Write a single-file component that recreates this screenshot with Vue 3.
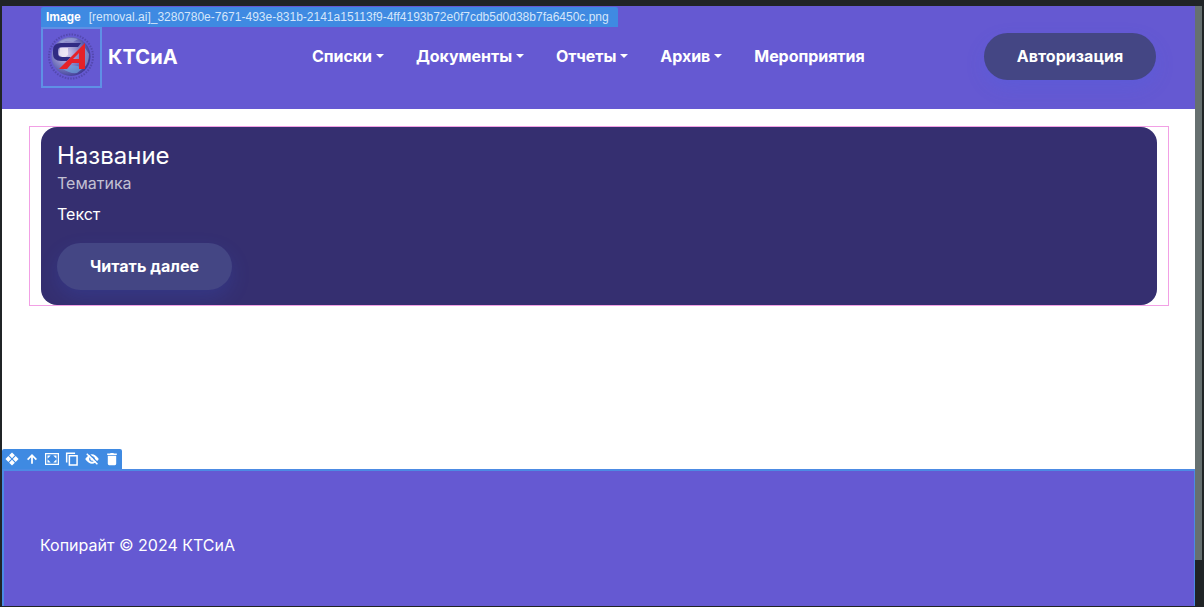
<script setup>
const menu = [
  { label: 'Списки', drop: true },
  { label: 'Документы', drop: true },
  { label: 'Отчеты', drop: true },
  { label: 'Архив', drop: true },
  { label: 'Мероприятия', drop: false },
]
</script>

<template>
  <div class="editor">
    <div class="page">
      <header class="header">
        <div class="brand">
          <div class="logo">
            <svg width="59" height="59" viewBox="0 0 59 59">
              <defs>
                <radialGradient id="globe" cx="38%" cy="42%" r="62%">
                  <stop offset="0" stop-color="#d9d0ee" />
                  <stop offset=".35" stop-color="#a19bd2" />
                  <stop offset=".7" stop-color="#686bb8" />
                  <stop offset="1" stop-color="#423c95" />
                </radialGradient>
              </defs>
              <circle cx="29" cy="28.500" r="22" fill="none" stroke="#4a3f9b" stroke-width="2" stroke-dasharray="1.500 1.300" opacity=".65" />
              <circle cx="29" cy="28.500" r="19.500" fill="url(#globe)" />
              <path d="M17 14q9-6 19-3l-5 3-7-1-4 2zM43 20l4 6q0 9-5 14z" fill="#a9b5e2" opacity=".5" />
              <path d="M21 41l6-4 9 1 4 3-5 4q-7 1-14-4z" fill="#6da6df" opacity=".65" />
              <path d="M18 20h8v7l-4 3-5-3z" fill="#f4edf6" opacity=".8" />
              <path d="M39 15H19q-8 0-8 7v4q0 7 8 7h6l4-4h-9q-4 0-4-4v-2q0-4 4-4h16z" fill="#302b83" />
              <path fill-rule="evenodd" d="M43 15v26h-6v-6h-7l-5 6h-8zM37 25l-6 6h6z" fill="#e62129" />
            </svg>
          </div>
          <span class="brand-name">КТСиА</span>
        </div>
        <nav class="menu">
          <a v-for="item in menu" :key="item.label" class="menu-item">
            {{ item.label }}<i v-if="item.drop" class="caret"></i>
          </a>
        </nav>
        <button class="button login">Авторизация</button>
        <div class="badge"><b>Image</b><span>[removal.ai]_3280780e-7671-493e-831b-2141a15113f9-4ff4193b72e0f7cdb5d0d38b7fa6450c.png</span></div>
      </header>

      <main class="main">
        <div class="card-outline">
          <article class="card">
            <h4>Название</h4>
            <h6>Тематика</h6>
            <p>Текст</p>
            <button class="button more">Читать далее</button>
          </article>
        </div>
      </main>

      <footer class="footer">
        <div class="toolbar">
          <svg viewBox="0 0 16 16"><path d="M8 .5l3.300 3.300L8 7.100 4.700 3.800zM8 8.900l3.300 3.300L8 15.500l-3.300-3.300zM3.800 4.700L7.100 8l-3.300 3.300L.5 8zM12.200 4.700L15.500 8l-3.300 3.300L8.900 8z" /></svg>
          <svg viewBox="0 0 16 16"><path d="M8 13.500V4M3 8.700l5-5 5 5" class="line" /></svg>
          <svg viewBox="0 0 14 14"><path d="M.6 1.600h12.800v10.800H.6z" class="frame" /><path d="M2.500 3.500h3.200L2.500 6.700zM11.500 3.500H8.300l3.200 3.200zM2.500 10.500h3.200L2.500 7.300zM11.500 10.500H8.300l3.200-3.200z" /></svg>
          <svg viewBox="0 0 16 16"><path d="M5 4.300h8.800v10.500H5z" class="thin" /><path d="M1.900 12V1.300h9.600" class="thin" /></svg>
          <svg viewBox="0 0 16 16"><path d="M.2 8q7.800-11 15.600 0-7.800 11-15.600 0z" /><circle cx="8" cy="8" r="3.200" class="pupil" /><circle cx="8" cy="8" r="1.900" /><path d="M3.700 1.200l11.500 11.500" class="gap" /><path d="M2 1.900l12.200 12.200" class="thin" /></svg>
          <svg viewBox="0 0 16 16"><path d="M2.500 1.800h3.200l.8-.8h3l.8.8h3.200v1.700h-11zM3.200 4.300h9.600v9.200q0 1.500-1.500 1.500H4.700q-1.500 0-1.500-1.500z" /></svg>
        </div>
        <span>Копирайт © 2024 КТСиА</span>
      </footer>
    </div>
    <div class="scroll"></div>
  </div>
</template>

<style>
body { margin: 0; background: #202426; }
</style>

<style scoped>
* { box-sizing: border-box; }
.editor {
  display: flex;
  width: 1204px;
  height: 607px;
  padding: 6px 2px 1px;
  overflow: hidden;
  background: #202426;
  font-family: Inter, sans-serif;
  font-size: 16px;
  line-height: 24px;
  color: #fff;
}
.page { display: flex; flex-direction: column; width: 1193px; background: #fff; }
.scroll { width: 7px; height: 554px; background: #667070; }
.header {
  position: relative;
  display: flex;
  align-items: center;
  justify-content: space-between;
  height: 103px;
  padding: 0 39px 3px;
  background: #6559d2;
}
.brand { display: flex; align-items: center; width: 271px; padding-top: 2px; }
.logo { width: 61px; height: 61px; border: 2px solid #5f90e5; margin-right: 6px; }
.logo svg { display: block; margin: -1px; }
.brand-name { font-size: 20px; font-weight: 700; line-height: 30px; letter-spacing: .1px; }
.menu { display: flex; gap: 32px; margin-right: auto; }
.menu-item { font-weight: 700; white-space: nowrap; letter-spacing: -.05px; }
.caret {
  display: inline-block;
  margin-left: 4px;
  vertical-align: 4px;
  border-top: 4px solid #fff;
  border-left: 4px solid transparent;
  border-right: 4px solid transparent;
}
.badge {
  position: absolute;
  left: 39px;
  top: 1px;
  display: flex;
  gap: 8px;
  width: 577px;
  height: 20px;
  padding-left: 5px;
  border-radius: 2px 2px 0 0;
  background: #3f8ae2;
  font: 12px/20px "Liberation Sans", Arial, sans-serif;
  white-space: nowrap;
}
.badge span { color: #d5e6fa; }
.button {
  display: block;
  height: 47px;
  padding: 0 0 2px;
  border: 0;
  border-radius: 24px;
  background: #444684;
  box-shadow: 0 8px 20px rgba(55, 99, 244, .16);
  color: #fff;
  font: 700 16px/24px Inter, sans-serif;
  letter-spacing: .04px;
}
.login { width: 172px; padding-bottom: 0; }
.more { width: 175px; }
.main { flex: 1; padding: 17px 26px 0 27px; }
.card-outline { height: 180px; padding: 0 11px; border: 1px solid #f2a0e5; }
.card {
  height: 178px;
  padding: 14px 16px 15px;
  border-radius: 16px;
  background: #352f70;
  overflow: hidden;
}
h4, h6, p { margin: 0; font-weight: 400; }
h4 { font-size: 24px; line-height: 29px; }
h6 { margin-top: 4px; font-size: 16px; line-height: 19px; color: #c2c0d3; }
p { margin: 9px 0 17px; }
.footer {
  position: relative;
  display: flex;
  align-items: center;
  height: 137px;
  padding: 13px 37px 0 36px;
  border: 2px solid #4c8be4;
  border-width: 2px 1px 0 2px;
  background: #6559d2;
}
.toolbar {
  position: absolute;
  left: -2px;
  top: -22px;
  display: flex;
  align-items: center;
  gap: 6px;
  width: 120px;
  height: 20px;
  padding-left: 3px;
  border-radius: 2px 2px 0 0;
  background: #3f8ae2;
}
.toolbar svg { width: 14px; height: 14px; flex: none; fill: #fff; }
.toolbar .line { fill: none; stroke: #fff; stroke-width: 2; }
.toolbar .thin { fill: none; stroke: #fff; stroke-width: 1.700; }
.toolbar .frame { fill: none; stroke: #fff; stroke-width: 1.200; }
.toolbar .pupil { fill: #3f8ae2; }
.toolbar .gap { stroke: #3f8ae2; stroke-width: 1.500; }
</style>
